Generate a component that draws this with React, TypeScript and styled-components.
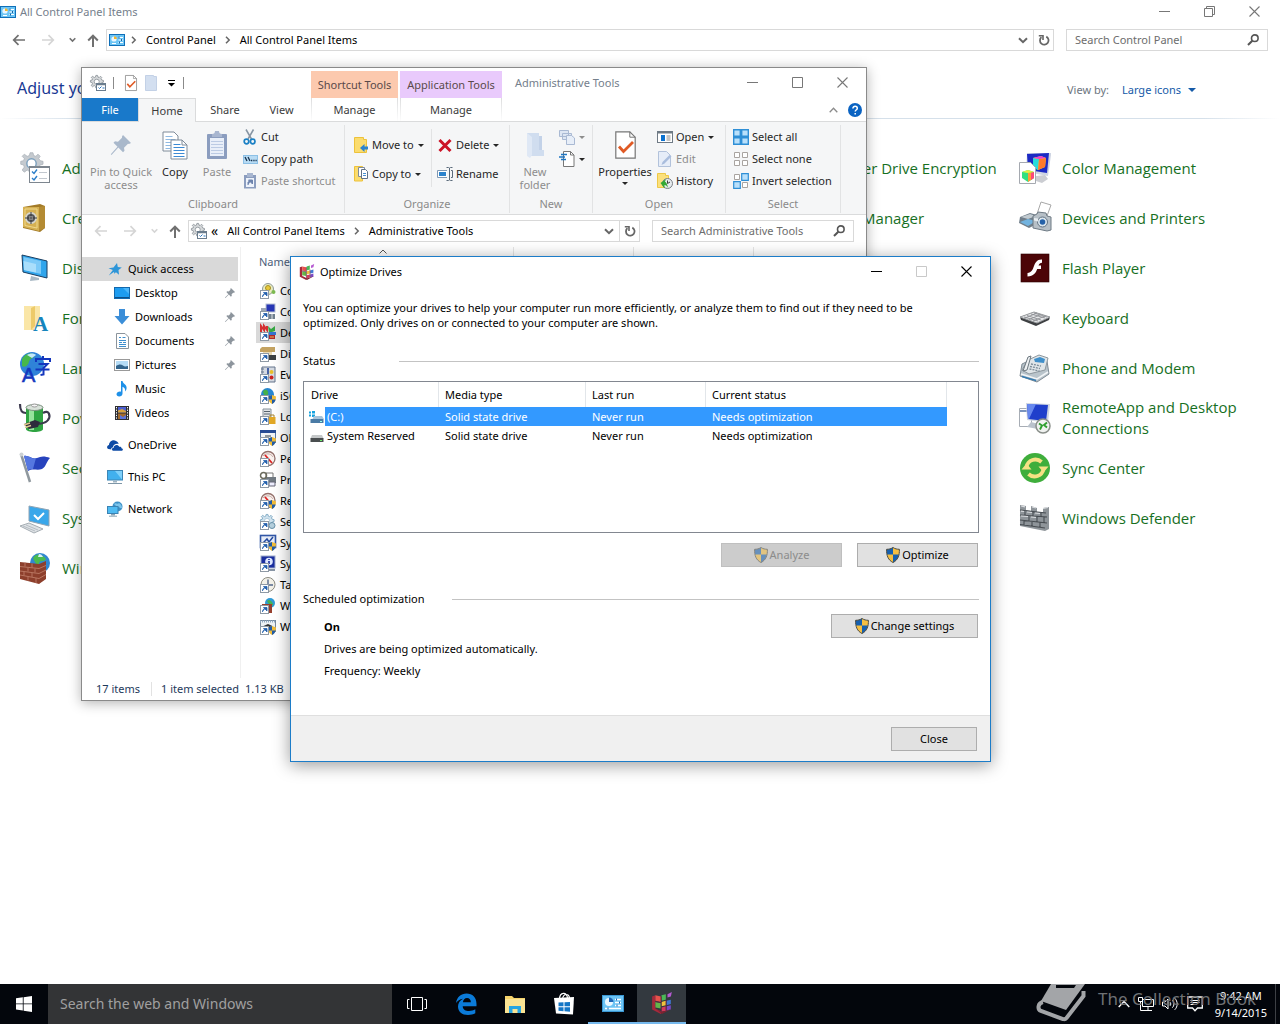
import React from 'react';
import styled, { createGlobalStyle, css } from 'styled-components';

const GlobalStyle = createGlobalStyle`
  *, *::before, *::after { box-sizing: border-box; }
  body { margin: 0; background: #fff; }
  body, button, input, select, table { font: 11px/16px "Noto Sans", "Open Sans", sans-serif; }
  button, input, select { margin: 0; padding: 0; border: 0; background: none; color: inherit; }
  svg { display: block; flex: none; overflow: visible; }
`;

/* ---------- icon helpers ---------- */

type SvgProps = { w: number; h?: number; vw?: number; vh?: number; children: React.ReactNode };
const Svg = ({ w, h = w, vw = w, vh = vw === w ? h : vw, children }: SvgProps) => (
  <svg width={w} height={h} viewBox={`0 0 ${vw} ${vh}`} fill="none" aria-hidden="true">{children}</svg>
);

const gearPath =
  'M14 1h4l1 4 3 1 3-3 3 3-2 3 2 3 4 1v4l-4 1-2 3 2 4-3 3-3-3-3 2-1 4h-4l-1-4-3-2-4 3-3-3 3-4-1-3-4-1v-4l4-1 1-3-3-3 3-3 4 3 3-1z';

/* ---------- window chrome icons ---------- */

const MinIcon = () => <Svg w={11}><path d="M0 5.500h11" stroke="currentColor" /></Svg>;
const MaxIcon = () => <Svg w={11}><path d="M.5 .5h10v10h-10z" stroke="currentColor" /></Svg>;
const RestoreIcon = () => <Svg w={11}><path d="M.5 2.500h8v8h-8zM2.500 2.500v-2h8v8h-2" stroke="currentColor" /></Svg>;
const CloseIcon = () => <Svg w={11}><path d="M.5 .5l10 10M10.500 .5l-10 10" stroke="currentColor" strokeWidth="1.100" /></Svg>;
const BackIcon = () => <Svg w={14} h={12}><path d="M13 6H2M6.500 1.200L1.700 6l4.800 4.800" stroke="currentColor" strokeWidth="1.700" /></Svg>;
const ForwardIcon = () => <Svg w={14} h={12}><path d="M1 6h11M7.500 1.200L12.300 6l-4.800 4.800" stroke="currentColor" strokeWidth="1.700" /></Svg>;
const UpIcon = () => <Svg w={12} h={13}><path d="M6 13V2M1.200 6.500L6 1.700l4.800 4.800" stroke="currentColor" strokeWidth="2" /></Svg>;
const DownIcon = () => <Svg w={7} h={6}><path d="M.7 1.200l2.800 2.800 2.800-2.800" stroke="currentColor" strokeWidth="1.600" /></Svg>;
const BigDownIcon = () => <Svg w={10} h={7}><path d="M1 1.200l4 4 4-4" stroke="currentColor" strokeWidth="2" /></Svg>;
const RightIcon = () => <Svg w={6} h={8}><path d="M1 .8L4.200 4 1 7.200" stroke="#666" strokeWidth="1.500" /></Svg>;
const RefreshIcon = () => <Svg w={12}><path d="M8.300 2.600A4.300 4.300 0 1 1 3.400 3.200" stroke="#666" strokeWidth="1.800" /><path d="M.8 1.800h4.200v4.200" stroke="#666" strokeWidth="1.600" /></Svg>;
const SearchIcon = () => <Svg w={12}><circle cx="7.800" cy="4.200" r="3.300" stroke="#555" strokeWidth="1.600" /><path d="M5.300 6.700L1 11" stroke="#555" strokeWidth="2" /></Svg>;
const Caret = () => <Svg w={6} h={3}><path d="M0 0h6L3 3z" fill="currentColor" /></Svg>;
const SortIcon = () => <Svg w={8} h={5}><path d="M.5 4.500L4 1l3.500 3.500" stroke="#555" /></Svg>;
const CollapseIcon = () => <Svg w={9} h={6}><path d="M.7 5.300l3.800-4 3.800 4" stroke="#8b8b8b" strokeWidth="1.300" /></Svg>;

const HelpIcon = () => (
  <Svg w={14}>
    <circle cx="7" cy="7" r="7" fill="#0a63c2" />
    <path d="M4.900 5.400c0-2.800 4.400-2.700 4.400 0 0 1.400-2.100 1.400-2.100 3.200M7.200 9.900v1.500" stroke="#fff" strokeWidth="1.500" />
  </Svg>
);

const ControlPanelIcon = () => (
  <Svg w={16} h={12}>
    <rect x=".5" y=".5" width="15" height="11" fill="#6cc5f5" stroke="#0f6fb8" />
    <circle cx="5" cy="5" r="2.600" fill="#e8f6ff" /><path d="M5 5V2.200A2.800 2.800 0 0 1 7.800 5z" fill="#f3b52e" />
    <path d="M3 9.500h4M9.500 3.500H14M9.500 6H14M9.500 8.500H14" stroke="#fff" strokeWidth="1.200" />
    <path d="M10 2.500v2M12.500 5v2M10.500 7.500v2" stroke="#1663a4" />
  </Svg>
);

const AdminToolsIcon = () => (
  <Svg w={16}>
    <g transform="scale(.42)"><path d={gearPath} fill="#d5d8da" stroke="#8b9298" strokeWidth="2" /><circle cx="16" cy="16" r="6" fill="#fff" stroke="#8b9298" strokeWidth="2" /></g>
    <rect x="6.500" y="8.500" width="9" height="7" fill="#fff" stroke="#6a7c8d" /><path d="M6.500 9.500h9" stroke="#6a7c8d" strokeWidth="1.500" />
    <path d="M8.500 12.500l1 1 2-2M12.500 13h2" stroke="#2673bd" />
  </Svg>
);

/* ---------- ribbon icons ---------- */

const PropertiesIcon = ({ w = 12, h = 16 }: { w?: number; h?: number }) => (
  <Svg w={w} h={h} vw={21} vh={28}>
    <path d="M.8 .8h14l5.400 5.400v21H.8z" fill="#fff" stroke="#767676" strokeWidth="1.200" />
    <path d="M14.800 .8v5.400h5.400" stroke="#767676" strokeWidth="1" />
    <path d="M4 15.500l4.500 5L18 11" stroke="#e05a25" strokeWidth="2.800" />
  </Svg>
);
const NewFolderSmall = () => <Svg w={12} h={16}><path d="M.5 .5h8v1h3v14H.5z" fill="#d3dff0" stroke="#c3d1e6" /></Svg>;
const NewFolderIcon = () => (
  <Svg w={20} h={28}>
    <path d="M2 2h12v3h3v14h2v6H2z" fill="#d0ddef" /><path d="M2 2l5 4v18l-2 3-3-2z" fill="#dfe8f5" /><path d="M14 5h3v14h-3z" fill="#c3d2e8" />
  </Svg>
);
const BigPinIcon = () => (
  <Svg w={22}>
    <path d="M13 1l8 8-2 1-1-.3-4 4 .5 3L13 18.200 8.300 13.500 1.500 21l-.7-.7L7.500 12.700 3.500 8.800 5 7.300l3 .5 4-4L12 2.500z" fill="#a9b8cb" />
  </Svg>
);
const CopyIcon = () => (
  <Svg w={26} h={29}>
    <path d="M1 1h11l4 4v15H1z" fill="#fff" stroke="#7f8b99" /><path d="M3.500 5.500h7M3.500 8.500h10M3.500 11.500h10M3.500 14.500h10M3.500 17.500h5" stroke="#8fb9e2" />
    <path d="M9 9h11l5 5v14H9z" fill="#fff" stroke="#7f8b99" /><path d="M20 9v5h5" stroke="#7f8b99" />
    <path d="M11.500 13.500h7M11.500 16.500h11M11.500 19.500h11M11.500 22.500h11M11.500 25.500h11" stroke="#3c8ad4" />
  </Svg>
);
const PasteIcon = () => (
  <Svg w={22} h={30}>
    <rect x="1" y="4" width="20" height="25" rx="1" fill="#8b9dbf" /><rect x="4" y="8" width="14" height="18" fill="#e9eff9" />
    <path d="M6 4c2 0 3-1 3-3h4c0 2 1 3 3 3v3H6z" fill="#a8b6d0" />
    <path d="M5 11.500h12M5 14.500h12M5 17.500h12M5 20.500h12M5 23.500h12" stroke="#bccbe4" />
  </Svg>
);
const CutIcon = () => (
  <Svg w={14} h={16}>
    <path d="M3 .5l5.500 9.500M10.500 .5L5 10" stroke="#8795a3" strokeWidth="1.500" />
    <circle cx="3.500" cy="12.500" r="2.300" stroke="#1b80c4" strokeWidth="1.700" /><circle cx="9.700" cy="12.500" r="2.300" stroke="#1b80c4" strokeWidth="1.700" />
  </Svg>
);
const CopyPathIcon = () => (
  <Svg w={15} h={9}>
    <rect x=".5" y=".5" width="14" height="8" fill="#b7dbf4" stroke="#8cc0e6" /><path d="M2 2l2 4M5 2l2 4M8 5.500h1.300M10.300 5.500h1.300M12.500 5.500h1.200" stroke="#16324d" strokeWidth="1.300" />
  </Svg>
);
const PasteShortcutIcon = () => (
  <Svg w={14} h={16}>
    <rect x="1" y="2" width="12" height="13.500" fill="#8b9dbf" /><path d="M4 0h6v4H4z" fill="#a8b6d0" /><rect x="3" y="5" width="8" height="9" fill="#eef3fb" />
    <path d="M5 12V9l3-1M5.500 7h4v4z" stroke="#6d83ad" fill="#6d83ad" />
  </Svg>
);
const MoveToIcon = () => (
  <Svg w={14} h={16}>
    <path d="M.5 .5h9v2h3v13H.5z" fill="#fbdc6e" stroke="#edc23b" /><path d="M14 9.500v3h-3.500V15L6 11l4.500-4v2.500z" fill="#2b83cd" />
  </Svg>
);
const CopyToIcon = () => (
  <Svg w={14} h={16}>
    <path d="M.5 .5h8v14.500H.5z" fill="#fbdc6e" stroke="#edc23b" /><path d="M4.500 1.500h6v9h-6z" fill="#fff" stroke="#7f8b99" />
    <path d="M7.500 3.500h4l2 2v7h-6z" fill="#fff" stroke="#5f7186" /><path d="M9 7.500h3M9 9.500h3" stroke="#4a90d0" />
  </Svg>
);
const DeleteIcon = () => <Svg w={14} h={13}><path d="M1.500 1l11 11M12.500 1l-11 11" stroke="#cc1427" strokeWidth="3" /></Svg>;
const RenameIcon = () => (
  <Svg w={16} h={14}>
    <path d="M10 3.500H.5v7H10" fill="#fff" stroke="#7f98b3" /><rect x="2" y="5" width="7" height="4" fill="#2b83cd" />
    <path d="M9.500 .5h2l1 .6 1-.6h2M9.500 13.500h2l1-.6 1 .6h2M12.500 1v12M14 3.500h1.500v7H14" stroke="#5b6b7b" />
  </Svg>
);
const NewItemIcon = () => (
  <Svg w={16}>
    <path d="M.5 1.500h9v6h-9zM3.500 4.500h9v6h-9z" fill="#dde6f3" stroke="#a9b9d3" /><path d="M7.500 6.500h5l3 2.500v6.500h-8z" fill="#e7eef8" stroke="#a9b9d3" />
  </Svg>
);
const EasyAccessIcon = () => (
  <Svg w={16}>
    <path d="M4.500 .5h7l3.500 3.500v11.500H4.500z" fill="#fff" stroke="#777" /><path d="M11.500 .5V4H15" stroke="#777" />
    <path d="M2 3.500h6M0 6h6M2 8.500h5" stroke="#1f77c3" strokeWidth="1.400" />
  </Svg>
);
const OpenIcon = () => (
  <Svg w={16} h={12}>
    <rect x=".5" y=".5" width="15" height="11" fill="#fff" stroke="#6f7a85" /><path d="M0 1.500h16" stroke="#6f7a85" strokeWidth="2" />
    <rect x="4" y="4" width="4" height="6" fill="#0b71cf" /><path d="M9.500 5h4M9.500 7h4M9.500 9h4" stroke="#888" />
  </Svg>
);
const EditIcon = () => (
  <Svg w={14} h={16}><path d="M.5 .5h8l4 4v11H.5z" fill="#e6edf8" stroke="#b2c2db" /><path d="M13.500 5.500l-7 7-3 1.500 1-3 7-7z" fill="#a9bddd" /></Svg>
);
const HistoryIcon = () => (
  <Svg w={16}>
    <path d="M.5 .5h8v2h3v12H.5z" fill="#fbe07d" stroke="#edc848" /><circle cx="10.500" cy="10.500" r="5" fill="#e6ebee" stroke="#7a7f85" />
    <path d="M10.500 7.500v3l2.500-1.500" stroke="#444" /><path d="M9 6L3.500 10l4 5.500V12c1.500 0 2.500 1 3.500 3-.4-4-2-6-3-6.300z" fill="#35a935" />
  </Svg>
);
const SelectAllIcon = () => (
  <Svg w={16}><path d="M.7 .7h6.600v6.600H.7zM8.700 .7h6.600v6.600H8.700zM.7 8.700h6.600v6.600H.7zM8.700 8.700h6.600v6.600H8.700z" fill="#b9e0fb" stroke="#2f8fd6" strokeWidth="1.400" /></Svg>
);
const SelectNoneIcon = () => (
  <Svg w={16}><path d="M1.500 1.500h5v5h-5zM9.500 1.500h5v5h-5zM1.500 9.500h5v5h-5zM9.500 9.500h5v5h-5z" fill="#fff" stroke="#a9a4a0" /></Svg>
);
const InvertIcon = () => (
  <Svg w={16}>
    <path d="M1.500 1.500h5v5h-5zM9.500 9.500h5v5h-5z" fill="#fff" stroke="#a9a4a0" /><path d="M8.700 .7h6.600v6.600H8.700zM.7 8.700h6.600v6.600H.7z" fill="#b9e0fb" stroke="#2f8fd6" strokeWidth="1.200" />
  </Svg>
);

/* ---------- navigation pane icons ---------- */

const PinIcon = () => (
  <Svg w={10} vw={22}><path d="M13 0l9 9-2 1.500-2-.3-3.500 3.500.5 3.500L13 19 8.500 14.500 1 22l-1-1 7.500-7.500L3 9l2-2 3.300.5L12 4l-.3-2z" fill="#8d959d" /></Svg>
);
const QuickAccessIcon = () => (
  <Svg w={14} h={13}><path d="M9 0l.8 3.900 4 .6-3.300 2.500.5 4.700L8 9.200l-2 1.500.2-2L.8 12.500 4.800 7 .5 5.300l5-.7z" fill="#2d95d8" /></Svg>
);
const DesktopIcon = () => <Svg w={16} h={12}><rect x=".5" y=".5" width="15" height="11" fill="#1d9cf0" stroke="#1268ad" /><path d="M1 10.500h14" stroke="#0d4f88" /><path d="M9 1h6v6z" fill="#4bb6fa" /></Svg>;
const DownloadsIcon = () => <Svg w={16}><path d="M5 0h6v7h4.500L8 15.500.5 7H5z" fill="#3b8ed8" /></Svg>;
const DocumentsIcon = () => (
  <Svg w={13} h={16}><path d="M.5 .5h8.500l3.500 3.500v11.500H.5z" fill="#fff" stroke="#8b949c" /><path d="M6.500 4.500h3M3 7.500h7M3 9.500h3M7 9.500h3M3 11.500h7M3 13.500h7M3 4.500h2" stroke="#3e8fce" /></Svg>
);
const PicturesIcon = () => (
  <Svg w={16} h={12}><rect x=".5" y=".5" width="15" height="11" fill="#fff" stroke="#999" /><path d="M2 2h12v8H2z" fill="#b5dcf6" /><path d="M2 7c3-2 5-2 7-.5s3 1 5 .5v3H2z" fill="#32648c" /></Svg>
);
const MusicIcon = () => <Svg w={12} h={16}><path d="M5 0h1.500c.5 3 5 3.500 4 8-.3 1.300-1 2-1.500 2.500.6-2.500-.5-4-2.500-4.800V12.500c0 1.800-1.500 3-3.300 3C1.500 15.500.5 14.500.5 13.300c0-1.800 2.300-3.200 4.500-2.600z" fill="#1e90e8" /></Svg>;
const VideosIcon = () => (
  <Svg w={14}><path d="M0 0h14v14H0z" fill="#2f2f33" /><path d="M3 1h8v5.500H3z" fill="#4c5fd0" /><path d="M3 7.500h8V13H3z" fill="#a36b2c" /><path d="M3 4.500l4-1.500 4 2v1.500H3z" fill="#d9a33d" /><path d="M5 9l3 2 3-2v4H5z" fill="#5c74dd" /><path d="M1.500 1v12M12.500 1v12" stroke="#fff" strokeDasharray="1.300 1.300" /></Svg>
);
const OneDriveIcon = () => (
  <Svg w={16} h={11}><path d="M1.500 9C-.5 8.500-.3 5.500 2 5c0-3 3.500-6 7-4 2 1 2.600 2.300 2.600 3-3-.7-5.500 1-5.600 3.300C4 7.800 4 8.800 4.500 9.500z" fill="#0e4ba5" /><path d="M7 10.800c-2.500 0-2.700-2.900-.3-3.100.2-3 4.300-3.500 5.500-.9 1.600-.3 2.400.5 2.300 1.500 1.800.1 1.900 2.500 0 2.500z" fill="#0e4ba5" /></Svg>
);
const PcIcon = () => (
  <Svg w={16} h={14}><rect x=".5" y=".5" width="15" height="9.500" fill="#41b0ee" stroke="#3d86b6" /><path d="M8 1h7v8.500z" fill="#7fd0fa" /><path d="M6 10.500h4v2H6z" fill="#9fb4c2" /><path d="M1 13.500h14" stroke="#7e96a7" /></Svg>
);
const NetworkIcon = () => (
  <Svg w={16}><circle cx="10.500" cy="5.500" r="5" fill="#3c90c7" /><path d="M7 3c2-2 3 1 5-1 2 1 3 3 3 5-2 1-3-2-5-1z" fill="#7dc4ea" /><rect x=".5" y="5.500" width="10.500" height="7" fill="#4fbbf2" stroke="#3a83b4" /><path d="M4 13h4v1.500H4z" fill="#8aa5b6" /><path d="M2 15.200h8" stroke="#8aa5b6" /></Svg>
);

/* ---------- shortcut file icons ---------- */

const fileArt: Record<string, React.ReactNode> = {
  component: <><circle cx="8" cy="6" r="5.500" fill="#e9ecc0" stroke="#8f9a9a" /><circle cx="8" cy="5" r="2.500" fill="#e8c93a" stroke="#a58e25" /><circle cx="13.500" cy="9" r="2" fill="#7dbb51" /></>,
  computer: <><rect x="6" y="0" width="9" height="8" fill="#2736b5" stroke="#b9c2d4" /><path d="M1 4h5v8H1z" fill="#9da7b6" /><path d="M9 10h6v5H9z" fill="#70808f" /><path d="M12 10v5" stroke="#dfe3e8" /></>,
  defrag: <><path d="M1 7V1l3 4V1l3 4V1" stroke="#d53030" strokeWidth="2" /><path d="M8 1l3 3 4-3v5l-6 2z" fill="#36a843" /><path d="M8 7h8v3H8z" fill="#3573d1" /><path d="M9 10h6v4H9z" fill="#b0272e" /><path d="M10 12h4" stroke="#e8b84e" /></>,
  disk: <><path d="M0 3l2-2h13v5H0z" fill="#c4a362" /><path d="M3 6h9v3H3z" fill="#e8d9b5" /><path d="M8 9h8v5H8z" fill="#3c4043" /></>,
  event: <><path d="M2 0h13v15H2z" fill="#d5dae2" stroke="#64748c" /><path d="M8 1v13" stroke="#4864a7" strokeWidth="2" /><path d="M1 2h3M1 5h3" stroke="#64748c" /><circle cx="11.500" cy="5" r="2" fill="#eabf2b" /><circle cx="11.500" cy="10.500" r="2" fill="#c22" /></>,
  iscsi: <><circle cx="7.500" cy="6.500" r="6.500" fill="#2585d1" /><path d="M3 3c3-3 6 0 5 3S3 8 3 3z" fill="#43b04a" /></>,
  local: <><path d="M3 0h8v9H3z" fill="#e0e4e6" stroke="#87929b" /><path d="M4 2.500h6M4 5h6" stroke="#57636e" /><rect x="8.500" y="8" width="7" height="7" fill="#e2a826" /><path d="M10 8V6h4v2" stroke="#a8832b" /></>,
  odbc: <><rect x=".5" y=".5" width="15" height="12" fill="#f1f4f7" stroke="#5978a5" /><path d="M0 1.500h16" stroke="#274c95" strokeWidth="3" /><path d="M5 6h6M4 8.500h9" stroke="#303a45" /></>,
  perf: <><circle cx="8" cy="7.500" r="7" fill="#f9f2ef" stroke="#94706b" strokeWidth="1.300" /><path d="M3 5c2-3 8-3 10 1" stroke="#c9aba6" /><path d="M5 4l7 8" stroke="#d22" strokeWidth="1.800" /></>,
  print: <><path d="M6 1h7v5H6z" fill="#fff" stroke="#777" /><path d="M5 5h11v6H5z" fill="#717a82" /><circle cx="3.500" cy="3.500" r="3" stroke="#6b6b5d" strokeWidth="1.500" /><path d="M9 10h6v4H9z" fill="#eef" stroke="#667" /></>,
  services: <><g transform="scale(.44)"><path d={gearPath} fill="#cfe2ee" stroke="#7aa5bf" strokeWidth="2" /><circle cx="16" cy="16" r="6" fill="#fff" stroke="#7aa5bf" /></g><circle cx="12" cy="11.500" r="3" fill="#b4cfdd" stroke="#6690a8" /></>,
  sysconf: <><rect x=".5" y=".5" width="15" height="12" fill="#e6ecf7" stroke="#3156a6" strokeWidth="1.600" /><path d="M3 8l4-4 2 3 4-5" stroke="#234a9f" strokeWidth="1.500" /></>,
  sysinfo: <><rect x="1" y="0" width="14" height="12" fill="#1b2f9f" stroke="#9facc9" /><circle cx="9" cy="5.500" r="3.800" fill="#dde6ff" /><path d="M9 3v1M9 5v3" stroke="#1b2f9f" strokeWidth="1.600" /><path d="M9 14h6" stroke="#8895a5" strokeWidth="2" /></>,
  task: <><circle cx="8" cy="7.500" r="7" fill="#f3f1e8" stroke="#8b8a80" /><path d="M8 2.500V8h5" stroke="#54688c" strokeWidth="1.400" /></>,
  firewall: <><circle cx="10" cy="5" r="5" fill="#2f9bd6" /><path d="M7 3c3-3 5 1 6 3s-4 2-6-3z" fill="#48b355" /><path d="M2 6h10v9H2z" fill="#97402e" /></>,
  memory: <><rect x=".5" y="1.500" width="15" height="11" fill="#eef2f5" stroke="#78899a" /><path d="M0 2.500h16" stroke="#8fa8c2" strokeWidth="2" strokeDasharray="1 1" /><path d="M4 8l4-2 4 2" stroke="#333" strokeWidth="2" /></>,
};
const fileShield = <><path d="M8 8.500l4-1.500 4 1.500c0 4-1.500 6-4 7.500-2.500-1.500-4-3.500-4-7.500z" fill="#f2bd37" /><path d="M12 7v4.500H8.300C8 10.500 8 9.500 8 8.500zM12 11.500h3.700C15 13.500 14 15 12 16z" fill="#215ca8" /></>;
const FileIcon = ({ kind, shield }: { kind: string; shield?: boolean }) => (
  <Svg w={16}>
    {fileArt[kind]}
    {shield && fileShield}
    <rect x=".5" y="7.500" width="8" height="8" fill="#fff" stroke="#8f9aa5" />
    <path d="M2.500 14c0-2 .7-3 2.500-3.300M3.500 9.500H7V13z" stroke="#2461ad" fill="#2461ad" strokeWidth=".8" />
  </Svg>
);

/* ---------- control panel icons ---------- */

const panelArt: Record<string, React.ReactNode> = {
  admin: <><g transform="translate(1 0) scale(.72)"><path d={gearPath} fill="#c5cacf" stroke="#a9b0b7" /><circle cx="16" cy="16" r="6.500" fill="#fff" stroke="#7ca0bd" strokeWidth="2" /></g><rect x="10.500" y="14.500" width="20" height="16" fill="#fff" stroke="#7d868f" /><path d="M10.500 15h20" stroke="#7d868f" strokeWidth="2" /><path d="M13 19.500l2 2 3-4M13 26l2 2 3-4" stroke="#2b7ec9" strokeWidth="1.400" /><path d="M20 20.500h8M20 26.500h8" stroke="#c2c8cf" /></>,
  credential: <><path d="M4 5l17-3 5 2v22l-5 4-17-4z" fill="#a37b28" /><path d="M4 5h16v24L4 25z" fill="#d5b052" /><path d="M20 5l6-1v22l-6 3z" fill="#b48b33" /><path d="M6 7h12v19L6 23.500z" stroke="#f0d88b" /><circle cx="12" cy="16" r="5" fill="#55575a" stroke="#d6d6cf" strokeWidth="1.800" /><circle cx="12" cy="16" r="2" fill="#ddd" /><path d="M12 10v12M6 16h12" stroke="#3b3d3f" /></>,
  display: <><path d="M3 3l25 6v17L4 20z" fill="#30a5ec" stroke="#1a3d60" /><path d="M4.500 5L22 9v13L5 18z" fill="#7ccaf8" /><path d="M4.500 9L17 12v8.500L5 18z" fill="#a9defb" /><path d="M12 24l8 2v2l-9 1z" fill="#a9b9c5" /></>,
  fonts: <><path d="M5 4h7l3 2v22H5z" fill="#f6da86" /><path d="M5 4h16v20l-9 4H5z" fill="#fae6a7" /><path d="M12 6l4-2v20l-4 4z" fill="#edca69" /><text x="14" y="29" fontFamily="Liberation Serif" fontSize="21" fontWeight="700" fill="#1685bd">A</text></>,
  language: <><circle cx="13" cy="12" r="12" fill="#2f83d8" /><path d="M3 7C7 0 13 1 16 3c-2 4-5 3-6 7s-5 6-7 4z" fill="#47b84b" /><path d="M8 3c3-2 7-2 9 0l-4 3z" fill="#c3e8f9" /><text x="3" y="30" fontFamily="Liberation Sans" fontSize="20" fill="#1436bd" stroke="#1436bd" strokeWidth=".6">A</text><path d="M24 4v3M17 10V7h14v3M19.500 12h9l-4 4v6.500l-3 .5M16.500 17.500h14" stroke="#1436bd" strokeWidth="2" /></>,
  power: <><path d="M7 6c0-4 17-4 17 0v21c0 4-17 4-17 0z" fill="#2fa442" /><path d="M10 6h5v22h-5z" fill="#97e39c" /><ellipse cx="15.500" cy="5.500" rx="8.500" ry="3" fill="#d9e2da" stroke="#7d8f80" /><ellipse cx="15.500" cy="3.500" rx="3" ry="1.500" fill="#f5f5f5" stroke="#999" /><path d="M1 2c0 7 2 9 6 9M24 11c6-4 8 3 5 7-2 3-5 3-9 4" stroke="#3c3a4e" strokeWidth="2.200" /><path d="M5 22l11-4 5 2-2 5-9 2z" fill="#2e2b3c" /><path d="M5 23l6-2M6 25.500l6-2" stroke="#e0c98c" strokeWidth="1.500" /></>,
  security: <><path d="M5 4c5-1 8 4 13 2 4-2 8-2 13 0-4 4-4 9-8 11-5 2-9-1-14 2z" fill="#2743bd" /><path d="M5 4c5-1 8 4 12 2l-3 11c-2 0-4 0-5 2z" fill="#5577e0" /><path d="M2 2l9 28" stroke="#8f989e" strokeWidth="2.500" /><circle cx="2.500" cy="2.500" r="2" fill="#ccd1d4" /></>,
  system: <><path d="M10 4l20 4v16l-20-5z" fill="#3aa7ea" stroke="#8fa4b5" /><path d="M15 13l4 4 6-6" stroke="#fff" strokeWidth="2" /><path d="M1 24l9-3 14 6-9 4z" fill="#dfe3e6" stroke="#a5adb3" /><path d="M4 24l12 5M7 23l12 5" stroke="#b6bdc3" /></>,
  firewall: <><circle cx="21" cy="11" r="10" fill="#3187d1" /><path d="M14 6c4-6 10-3 13 1-2 4-7 0-7 5s-4-1-6-6z" fill="#4bbb50" /><path d="M20 2c2 0 3 1 4 3h-5z" fill="#d6f0fa" /><path d="M1 10l19 2v20L1 27zM20 12l7-3v18l-7 5z" fill="#8d3f2c" /><path d="M1 14.500l19 2 7-3M1 19l19 2.500 7-3.500M1 23l19 3.500 7-4M6 10.500v4M13 11.500v4.500M9 15.500v4M16 16.500v4M5 19.500v4M13 21v4M9 24.500v4M17 26v5" stroke="#b87560" /></>,
  device: <><rect x="3" y="14" width="26" height="12" fill="#aaa" /></>,
  color: <><path d="M8 1h24v2l-3 21-22-4z" fill="#cfd5e3" /><path d="M8 2l22-1-2 20-19-3z" fill="#1c2ac4" /><path d="M14 6l8-2 5 2-1 9-7 3-5-3z" fill="#ffd83d" /><path d="M14 6l6 1-1 11-5-3z" fill="#27dbda" /><path d="M20 7l7-1-1 9-7 3z" fill="#ff7a2c" /><path d="M14 6l8-2 5 2-7 1z" fill="#ed3cd5" /><path d="M17 24l9-1 3 4-6 4-6-2z" fill="#cbcdd2" /><path d="M.5 10.500h11l5 5v16H.5z" fill="#fff" stroke="#a5a9b0" /><path d="M3 20l6-2 6 2v6l-6 4-6-4z" fill="#30e080" /><path d="M9 21l6-1v6l-6 4z" fill="#ff9d35" /><path d="M3 20l6-2 6 2-6 1z" fill="#e7ef42" /><path d="M12 21l3-1v6l-3 2z" fill="#fa4a7b" /></>,
  devices: <><path d="M18 12l4-12 10 3-4 11z" fill="#fff" stroke="#a8a8a8" /><path d="M1 15l10-4 7 2v9l-8 4-10-5z" fill="#707e8a" /><path d="M2 15l9-3 6 2-8 3z" fill="#c2cbd1" /><path d="M1 20l8-3 8 2-8 5z" fill="#72b3df" /><path d="M14 14l4-2 1-2 8 1 1 3 4 1v13l-4 1-14-3z" fill="#b7c0c7" stroke="#6e7a84" /><circle cx="23.500" cy="20" r="5" fill="#dbe6ed" stroke="#637383" /><circle cx="23.500" cy="20" r="2.800" fill="#2662a8" /><path d="M15 16l4 .5v3l-4-1z" fill="#e7edf1" /></>,
  flash: <><rect x="2" y="2" width="28" height="28" fill="#4c0507" stroke="#2a0203" strokeWidth=".6" /><path d="M23 7.500c-5-.3-7 3.500-8 6.500-1.300 3.800-2.500 6.500-6.500 7v3.500c6 0 8.500-4 9.700-7.500H22v-3.500h-2.500c.8-1.700 1.700-2.700 3.500-2.700z" fill="#fff" /></>,
  keyboard: <><path d="M1 15l14-5 16 5-1 3-13 6L2 18z" fill="#3e4043" /><path d="M1 15l14-5 16 5-13 6z" fill="#e5e6e8" stroke="#9b9ea1" /><path d="M5 15l14 4M8 13.500l14 4.500M12 12l14 4M15 11l13 4M5 16.500l13-5.500M10 17.500l12-5M14 19l12-5" stroke="#8d9094" strokeWidth=".9" /></>,
  phone: <><path d="M1 24l2-12L20 4l8 5 2 13-12 8z" fill="#b9c4cb" stroke="#7f8b94" /><path d="M9 8l11-5 9 3-3 12-16 4-7-4z" fill="#dfe5e8" stroke="#8d979e" /><path d="M15 7l6-2 5 2-1 4-9-1z" fill="#3f8fca" /><path d="M4 19L9 5l3-1-4 14z" fill="#eef1f3" stroke="#6d7880" /><path d="M12 12l10 2M11 14.500l10 2M10.500 17l10 2" stroke="#7c8c98" strokeWidth="1.300" strokeDasharray="2 1" /><path d="M2 22l16 5 11-7" stroke="#f1f4f6" strokeWidth="1.500" /><path d="M3 24.500l14 4" stroke="#367bb0" strokeWidth="1.500" /></>,
  remote: <><path d="M.5 6.500h12v18H.5z" fill="#fff" stroke="#a7adb5" /><path d="M1 9h11" stroke="#7a93bd" strokeWidth="2" /><path d="M7 1l24 1-2 19-21-3z" fill="#ced5e1" /><path d="M8 2l21 1-2 16-18-2z" fill="#1f3fcb" /><path d="M8 2h9l-7 15H9z" fill="#6788ee" /><path d="M12 20l8 2-1 5-11-2z" fill="#bac2cc" /><circle cx="24" cy="24" r="7" fill="#f0f2f0" stroke="#8a8f8a" strokeWidth="1.500" /><path d="M20 21.500l3 2-2 4M28 20.500l-3 2.500 3 2.500" stroke="#2e9f2e" strokeWidth="1.900" /></>,
  sync: <><circle cx="16" cy="16" r="15" fill="#3fae3c" /><path d="M7.500 15a9 9 0 0 1 15-5M24.500 17a9 9 0 0 1-15 5" stroke="#f6e184" strokeWidth="3.800" /><path d="M2.500 17.500h10L7.500 11.500zM29.500 14.500h-10l5 6z" fill="#f6e184" /></>,
  defender: <><path d="M1 3l6 1v4l5 1V4l6 2v4h6V6l6-1v22l-4 2L1 24z" fill="#8e9499" /><path d="M1 8l26 3M1 13l27 2M1 18l27 3M1 22.500l25 3.500M6 8.500V13M14 9.500V14M22 10.500V15M10 13.500V19M18 14.500V20M25 15v6M5 18.500v5M13 19.500v5M21 20.500v5" stroke="#484d52" strokeWidth="1.100" /><path d="M2 4l4 .8M13 5l4 1M24 6.500l5-1M2 9.200l3 .3M8 10l5 .5M16 11l5 .5M2 14l7 .5M12 15l5 .5" stroke="#dadde0" strokeWidth="1.200" /></>,
};
const PanelIcon = ({ kind }: { kind: string }) => <Svg w={32}>{panelArt[kind]}</Svg>;

/* ---------- dialog and taskbar icons ---------- */

const DefragIcon = ({ size = 16 }: { size?: number }) => (
  <Svg w={size} vw={20}>
    <path d="M1 4l3-1v12l6 3-1 2-8-4z" fill="#a52a3c" /><path d="M4 3l5 1v5l-5-1z" fill="#e8524c" /><path d="M4 9l5 1v5l-5-1z" fill="#63b64a" />
    <path d="M9.500 3l4-1v5l-4 1z" fill="#4bb857" /><path d="M9.500 9l4-1v4l-4 1z" fill="#f0c33c" /><path d="M9.500 14l4-1v4l-4 1z" fill="#d53a5c" />
    <path d="M14 8l4-1v4l-4 1z" fill="#3f78d3" /><path d="M14 13l4-1v4l-4 1z" fill="#7a48c6" /><path d="M15 2l4-2-1 4-3 1z" fill="#b65ad2" />
    <path d="M4 15l5 3 5-1 5-2-9 5z" fill="#7d2230" /><path d="M9.200 4v14M4 8.700l5 1M13.800 7v10" stroke="#5a2440" strokeWidth=".8" />
  </Svg>
);
const ShieldIcon = () => (
  <Svg w={14} h={16}>
    <path d="M7 .5C5 1.800 3 2.300 .6 2.300.4 8.500 2 13 7 15.500 12 13 13.600 8.500 13.400 2.300 11 2.300 9 1.800 7 .5z" fill="#f5bf42" />
    <path d="M7 .5C5 1.800 3 2.300 .6 2.300c0 2 .1 3.700.5 5.200H7zM7 7.500h5.900c-.8 3.800-2.600 6.400-5.900 8z" fill="#1560b0" />
    <path d="M7 .5C5 1.800 3 2.300 .6 2.300.4 8.500 2 13 7 15.500 12 13 13.600 8.500 13.400 2.300 11 2.300 9 1.800 7 .5z" stroke="#4c4c45" strokeWidth="1" />
  </Svg>
);
const SystemDriveIcon = () => (
  <Svg w={16} h={14}><path d="M0 1.500h2v2H0zM3 1h3v2.500H3zM0 4.500h2v2H0zM3 4.500h3V7H3z" fill="#17a3e0" /><path d="M3.500 9l1.500-3h8l2 3z" fill="#a9c4da" /><path d="M1.500 9h13v4h-13z" fill="#4a7ba5" /><path d="M11 11.500h2" stroke="#9fe" /></Svg>
);
const DriveIcon = () => <Svg w={16} h={14}><path d="M3 6h10l1.500 3.500h-13z" fill="#c5c8c9" /><path d="M1.500 9h13v4h-13z" fill="#4a4e50" /><path d="M11 11.500h2" stroke="#6cf06c" /></Svg>;

const StartIcon = () => <Svg w={16}><path d="M0 2.300l6.800-1v6.200H0zM7.600 1.200L16 0v7.500H7.600zM0 8.300h6.800v6.300L0 13.600zM7.600 8.300H16V16l-8.400-1.200z" fill="#fff" /></Svg>;
const TaskViewIcon = () => <Svg w={20} h={14}><path d="M4.500 .5h11v13h-11zM2.500 2.500h-2v9h2M17.500 2.500h2v9h-2" stroke="#fff" /></Svg>;
const EdgeIcon = () => (
  <Svg w={22}><path d="M1 10C2 4 6 .5 11.500 .5 17.500 .5 21.500 4.500 21.500 11v2.200H7.700c.2 3.300 3 4.800 6.300 4.800 2.500 0 4.500-.6 6.300-1.700v4c-2 1.100-4.400 1.700-7.300 1.700C7 22 3 18.500 3 13.500c0-3.300 1.800-6.200 5-7.800C4.800 6.200 2.500 7.700 1 10zM7.900 9.300h8C15.800 6.800 14.500 5 12 5 9.700 5 8.300 6.700 7.900 9.300z" fill="#0b7bd9" /></Svg>
);
const FolderTaskIcon = () => (
  <Svg w={22} h={20}><path d="M1 2h7l2 2h11v15H1z" fill="#f5d36c" /><path d="M1 5h20v14H1z" fill="#fbe393" /><path d="M5 19v-7h12v7h-3.500v-4h-5v4z" fill="#27a5e3" /></Svg>
);
const StoreIcon = () => (
  <Svg w={22} h={24}><path d="M1 6l20-1-1 17.500-17-1z" fill="#fff" /><path d="M6.500 7.500c0-8 8-8 8-1M9.500 7c1-6 7-6 7 0" stroke="#fff" strokeWidth="1.200" /><path d="M5.500 10.500l5-.3v4h-5zM11.500 10.200l5.500-.3v4.300h-5.500zM5.500 15.200h5v4l-5-.4zM11.500 15.200H17v4.500l-5.500-.4z" fill="#1476c6" /></Svg>
);
const ControlPanelTask = () => (
  <Svg w={22} h={17}><rect x=".5" y=".5" width="21" height="16" fill="#6cc4f5" stroke="#3b97d3" /><circle cx="7" cy="7" r="4" fill="#eaf7ff" /><path d="M7 7V2.500A4.500 4.500 0 0 1 11.500 7z" fill="#1c64b5" /><path d="M13 4.500h6M13 7.500h6M13 10.500h6M3 13.500h16" stroke="#fff" strokeWidth="1.300" /><path d="M14.500 3.500v2M17.500 6.500v2M15 9.500v2M6 12.500v2" stroke="#1c64b5" /></Svg>
);
const TrayUp = () => <Svg w={12} h={8}><path d="M.7 7L6 1.500 11.300 7" stroke="#fff" strokeWidth="1.400" /></Svg>;
const TrayNet = () => <Svg w={16} h={15}><path d="M4.500 2.500h11v7h-11zM10 10v3.500M6 13.500h8M.5 .5h4v4h-4zM2.500 4.500v9H6" stroke="#fff" /></Svg>;
const TrayVolume = () => <Svg w={17} h={14}><path d="M.5 5h2.500l3-3v10l-3-3H.5zM8 5.200c1 1 1 2.600 0 3.600M10.300 3.300c2.200 2 2.200 5.400 0 7.400M12.700 1.200c3.300 3.200 3.300 8.400 0 11.600" stroke="#fff" /></Svg>;
const TrayAction = () => <Svg w={16}><path d="M.7 1h14.600v11H10.500L8 14.700 5.500 12H.7z" stroke="#fff" strokeWidth="1.300" /><path d="M3.500 4.500h9M3.500 6.500h9M3.500 8.500h6" stroke="#fff" /></Svg>;
const BookIcon = () => (
  <Svg w={50} h={39}>
    <path d="M15 0h34L30 26 5 17z" fill="#a3a5a8" />
    <path d="M7 18c-5 1-6 7-2 9l22 8c1.500 .6 2.500 .2 3.500-1L47.500 12V7" stroke="#a3a5a8" strokeWidth="4" />
    <path d="M20 1h20l-2 3H20z" fill="#03060c" />
  </Svg>
);

/* ---------- shared parts ---------- */

const Desktop = styled.div`
  position: relative;
  display: flex;
  flex-direction: column;
  min-height: 100vh;
  overflow: hidden;
  color: #1a1a1a;
`;

const Controls = styled.div<{ $color: string }>`
  display: flex;
  align-self: stretch;
  margin-left: auto;
  color: ${p => p.$color};
`;
const ControlButton = styled.button`
  display: grid;
  place-items: center;
  width: 45px;
  padding-bottom: 2px;
  &:disabled { color: #c9c9c9; }
`;

const NavBar = styled.nav`
  display: flex;
  align-items: center;
  height: 32px;
  padding: 0 12px 0 5px;
`;
const NavButton = styled.button<{ $width: number }>`
  display: grid;
  place-items: center;
  width: ${p => p.$width}px;
  height: 22px;
  color: #707070;
  &:disabled { color: #d5d5d5; }
`;
const AddressBox = styled.div`
  display: flex;
  flex: 1;
  align-items: center;
  height: 22px;
  margin: 0 12px 0 1px;
  padding-left: 2px;
  border: 1px solid #d9d9d9;
  color: #000;
`;
const Crumb = styled.span`
  padding: 0 9px 0 9px;
  white-space: nowrap;
`;
const AddressEnd = styled.div`
  display: flex;
  height: 20px;
  margin-left: auto;
  color: #666;
`;
const EndButton = styled.button`
  display: grid;
  place-items: center;
  width: 20px;
  & + & { border-left: 1px solid #d9d9d9; }
`;
const SearchBox = styled.label`
  display: flex;
  align-items: center;
  width: 202px;
  height: 22px;
  padding: 0 8px;
  border: 1px solid #d9d9d9;
`;
const SearchInput = styled.input`
  flex: 1;
  min-width: 0;
  outline: 0;
  &::placeholder { color: #6d6d6d; opacity: 1; }
`;
const CrumbArrow = styled.span<{ $first: boolean }>`
  padding-left: ${p => (p.$first ? 6 : 0)}px;
`;
const Chevrons = styled.span`
  padding-left: 4px;
  font-size: 14px;
`;

type NavProps = { icon: React.ReactNode; crumbs: string[]; search: string; active?: boolean; prefix?: boolean };
const Navigation = ({ icon, crumbs, search, active, prefix }: NavProps) => (
  <NavBar>
    <NavButton $width={28} aria-label="Back" disabled={!active}><BackIcon /></NavButton>
    <NavButton $width={30} aria-label="Forward" disabled><ForwardIcon /></NavButton>
    <NavButton $width={18} aria-label="Recent locations" disabled={!active}><DownIcon /></NavButton>
    <NavButton $width={24} aria-label="Up"><UpIcon /></NavButton>
    <AddressBox>
      {icon}
      {crumbs.map((c, i) => (
        <React.Fragment key={c}>
          {prefix && i === 0 ? <Chevrons>«</Chevrons> : <CrumbArrow $first={i === 0}><RightIcon /></CrumbArrow>}
          <Crumb>{c}</Crumb>
        </React.Fragment>
      ))}
      <AddressEnd>
        <EndButton aria-label="Previous locations"><BigDownIcon /></EndButton>
        <EndButton aria-label="Refresh"><RefreshIcon /></EndButton>
      </AddressEnd>
    </AddressBox>
    <SearchBox>
      <SearchInput type="text" placeholder={search} aria-label={search} />
      <SearchIcon />
    </SearchBox>
  </NavBar>
);

/* ---------- control panel window ---------- */

const Panel = styled.main`
  flex: 1;
  background: #fff;
`;
const PanelTitle = styled.header`
  display: flex;
  align-items: center;
  height: 24px;
  padding-right: 3px;
  gap: 4px;
  color: #75808c;
`;
const PanelHead = styled.div`
  display: flex;
  align-items: center;
  justify-content: space-between;
  height: 62px;
  padding: 2px 84px 0 17px;
`;
const PanelHeading = styled.h1`
  margin: 0;
  color: #1a3a94;
  font-size: 16px;
  font-weight: 400;
`;
const ViewBy = styled.div`
  display: flex;
  align-items: center;
  padding-top: 3px;
  color: #6d7580;
`;
const ViewSelect = styled.select`
  margin: 0 6px 0 13px;
  appearance: none;
  color: #155aa8;
`;
const ViewCaret = styled.span`
  color: #155aa8;
`;
const FadeRule = styled.hr`
  height: 1px;
  margin: 0;
  border: 0;
  background: linear-gradient(90deg, #fff, #d5e0ea 6%, #d5e0ea 94%, #fff);
`;
const ItemGrid = styled.div`
  display: grid;
  grid-template-columns: repeat(5, 1fr);
  grid-auto-rows: 50px;
  padding: 24px 11px 0 19px;
`;
const PanelItem = styled.a<{ $col: number; $row: number }>`
  display: flex;
  grid-area: ${p => p.$row} / ${p => p.$col};
  align-items: center;
  gap: 11px;
  color: #17701f;
  font-family: "Open Sans", "Noto Sans", sans-serif;
  font-size: 15px;
  line-height: 21px;
  text-decoration: none;
`;

const panelItems: [string, string, number, number][] = [
  ['Administrative Tools', 'admin', 1, 1], ['BitLocker Drive Encryption', 'device', 1, 4], ['Color Management', 'color', 1, 5],
  ['Credential Manager', 'credential', 2, 1], ['Device Manager', 'device', 2, 4], ['Devices and Printers', 'devices', 2, 5],
  ['Display', 'display', 3, 1], ['Flash Player', 'flash', 3, 5],
  ['Fonts', 'fonts', 4, 1], ['Keyboard', 'keyboard', 4, 5],
  ['Language', 'language', 5, 1], ['Phone and Modem', 'phone', 5, 5],
  ['Power Options', 'power', 6, 1], ['RemoteApp and Desktop Connections', 'remote', 6, 5],
  ['Security and Maintenance', 'security', 7, 1], ['Sync Center', 'sync', 7, 5],
  ['System', 'system', 8, 1], ['Windows Defender', 'defender', 8, 5],
  ['Windows Firewall', 'firewall', 9, 1],
];

const ControlPanel = () => (
  <Panel>
    <PanelTitle>
      <ControlPanelIcon />
      All Control Panel Items
      <Controls $color="#777">
        <ControlButton aria-label="Minimize"><MinIcon /></ControlButton>
        <ControlButton aria-label="Restore"><RestoreIcon /></ControlButton>
        <ControlButton aria-label="Close"><CloseIcon /></ControlButton>
      </Controls>
    </PanelTitle>
    <Navigation active icon={<ControlPanelIcon />} crumbs={['Control Panel', 'All Control Panel Items']} search="Search Control Panel" />
    <PanelHead>
      <PanelHeading>Adjust your computer's settings</PanelHeading>
      <ViewBy>
        <label htmlFor="view-by">View by:</label>
        <ViewSelect id="view-by"><option>Large icons</option></ViewSelect>
        <ViewCaret><Svg w={8} h={4}><path d="M0 0h8L4 4z" fill="currentColor" /></Svg></ViewCaret>
      </ViewBy>
    </PanelHead>
    <FadeRule />
    <ItemGrid>
      {panelItems.map(([name, kind, row, col]) => (
        <PanelItem key={name} href="#" $row={row} $col={col}><PanelIcon kind={kind} />{name}</PanelItem>
      ))}
    </ItemGrid>
  </Panel>
);

/* ---------- explorer window ---------- */

const Explorer = styled.section`
  position: absolute;
  top: 67px;
  left: 81px;
  display: flex;
  flex-direction: column;
  width: 786px;
  border: 1px solid #8a8a8a;
  background: #fff;
  box-shadow: 0 2px 12px rgba(0, 0, 0, 0.3);
`;
const ExplorerTop = styled.header`
  display: flex;
  align-items: center;
  height: 30px;
  padding-right: 1px;
`;
const QuickBar = styled.div`
  display: flex;
  align-items: center;
  width: 229px;
  padding-left: 8px;
`;
const QuickButton = styled.button`
  display: grid;
  place-items: center;
  width: 20px;
  height: 20px;
  color: #000;
`;
const QuickRule = styled.span<{ $left: number }>`
  width: 1px;
  height: 12px;
  margin: 0 7px 0 ${p => p.$left}px;
  background: #8a8a8a;
`;
const ContextTitle = styled.div<{ $width: number; $color: string }>`
  align-self: flex-end;
  width: ${p => p.$width}px;
  height: 27px;
  margin-right: 2px;
  background: ${p => p.$color};
  color: #5a4a4a;
  line-height: 28px;
  text-align: center;
  white-space: nowrap;
`;
const ExplorerTitle = styled.h2`
  margin: 0 0 0 11px;
  color: #75808c;
  font-size: 11px;
  font-weight: 400;
`;
const TabRow = styled.div`
  display: flex;
  align-items: stretch;
  height: 24px;
  border-bottom: 1px solid #dadbdc;
`;
const Tab = styled.button<{ $width: number; $kind?: 'file' | 'open' | 'context' }>`
  width: ${p => p.$width}px;
  color: #3b3b3b;
  text-align: center;
  ${p => p.$kind === 'file' && css`background: #1979ca; color: #fff;`}
  ${p => p.$kind === 'open' && css`
    margin-bottom: -1px;
    border: 1px solid #dadbdc;
    border-bottom: 0;
    background: #f5f6f7;
  `}
  ${p => p.$kind === 'context' && css`
    margin-right: 2px;
    border: 1px solid;
    border-width: 0 1px;
    border-image: linear-gradient(#dadbdc, #fff) 1;
  `}
`;
const TabSpacer = styled.span`
  width: 2px;
`;
const TabEnd = styled.div`
  display: flex;
  align-items: center;
  gap: 10px;
  margin-left: auto;
  padding-right: 4px;
`;
const IconButton = styled.button`
  display: grid;
  place-items: center;
`;

const Ribbon = styled.div`
  display: flex;
  height: 93px;
  border-bottom: 1px solid #dadbdc;
  background: #f5f6f7;
`;
const Group = styled.div<{ $width: number }>`
  display: flex;
  flex-direction: column;
  width: ${p => p.$width}px;
  margin: 3px 0 1px;
  border-right: 1px solid #e2e3e4;
`;
const GroupBody = styled.div<{ $pad: number }>`
  display: flex;
  flex: 1;
  align-items: flex-start;
  padding-left: ${p => p.$pad}px;
`;
const GroupLabel = styled.div`
  color: #8a8a8a;
  line-height: 18px;
  text-align: center;
`;
const BigButton = styled.button<{ $width: number }>`
  display: flex;
  flex-direction: column;
  align-items: center;
  width: ${p => p.$width}px;
  color: #262626;
  line-height: 13px;
  &:disabled { color: #8d8d8d; }
`;
const BigArt = styled.span`
  display: grid;
  place-items: center;
  height: 40px;
`;
const BigCaret = styled.span`
  padding-top: 4px;
`;
const SmallColumn = styled.div<{ $wide?: boolean; $left?: number }>`
  display: flex;
  flex-direction: column;
  gap: ${p => (p.$wide ? 7 : 0)}px;
  padding-top: ${p => (p.$wide ? 9 : 1)}px;
  margin-left: ${p => p.$left ?? 0}px;
`;
const SmallButton = styled.button`
  display: flex;
  align-items: center;
  gap: 4px;
  height: 22px;
  color: #262626;
  white-space: nowrap;
  &:disabled { color: #8d8d8d; }
`;
const SmallArt = styled.span`
  display: grid;
  place-items: center;
  width: 16px;
  margin-right: -1px;
`;
const GroupRule = styled.span`
  width: 1px;
  height: 58px;
  margin: 4px 5px 0 auto;
  background: #e2e3e4;
`;
const RuledColumn = styled.div`
  display: flex;
  width: 84px;
`;

const Small = ({ icon, label, caret, disabled }: { icon: React.ReactNode; label: string; caret?: boolean; disabled?: boolean }) => (
  <SmallButton disabled={disabled}><SmallArt>{icon}</SmallArt>{label}{caret && <Caret />}</SmallButton>
);

const ExplorerBody = styled.div`
  display: flex;
`;
const Sidebar = styled.nav`
  width: 159px;
  padding: 10px 2px 0 0;
  border-right: 1px solid #f0f0f0;
`;
const SideItem = styled.a<{ $level?: 'root' | 'child'; $selected?: boolean }>`
  display: flex;
  align-items: center;
  height: 24px;
  margin-bottom: ${p => (p.$level === 'root' ? 8 : 0)}px;
  padding: 0 3px 0 ${p => (p.$level === 'child' ? 31 : 24)}px;
  background: ${p => (p.$selected ? '#d9d9d9' : 'none')};
  color: #000;
  text-decoration: none;
`;
const SideArt = styled.span`
  display: grid;
  place-items: center;
  width: 18px;
  margin-right: 4px;
`;
const SidePin = styled.span`
  margin-left: auto;
`;
const SideGap = styled.div`
  height: 8px;
`;
const FilePane = styled.div`
  flex: 1;
  min-height: 431px;
  padding-left: 15px;
`;
const FileHeader = styled.div`
  display: grid;
  grid-template-columns: 255px 120px 120px 1fr;
  height: 30px;
  margin-bottom: 3px;
  padding-left: 3px;
  color: #4c607a;
  line-height: 29px;
`;
const FileHeadCell = styled.span`
  position: relative;
  border-right: 1px solid #e5e5e5;
`;
const SortMark = styled.span`
  position: absolute;
  top: 2px;
  left: 120px;
`;
const FileRow = styled.div<{ $selected?: boolean }>`
  display: flex;
  align-items: center;
  gap: 4px;
  height: 21px;
  padding-left: 4px;
  background: ${p => (p.$selected ? '#d9d9d9' : 'none')};
  color: #000;
`;
const StatusBar = styled.footer`
  display: flex;
  align-items: center;
  height: 22px;
  padding-left: 14px;
  color: #1e395b;
`;
const StatusRule = styled.span`
  width: 1px;
  height: 14px;
  margin: 0 9px 0 11px;
  background: #e2e2e2;
`;
const StatusSize = styled.span`
  padding-left: 6px;
`;

const sideItems: [string, React.ReactNode, boolean][] = [
  ['Desktop', <DesktopIcon />, true], ['Downloads', <DownloadsIcon />, true], ['Documents', <DocumentsIcon />, true],
  ['Pictures', <PicturesIcon />, true], ['Music', <MusicIcon />, false], ['Videos', <VideosIcon />, false],
];
const rootItems: [string, React.ReactNode][] = [['OneDrive', <OneDriveIcon />], ['This PC', <PcIcon />], ['Network', <NetworkIcon />]];
const files: [string, string, boolean?][] = [
  ['Component Services', 'component'], ['Computer Management', 'computer'], ['Defragment and Optimize Drives', 'defrag'],
  ['Disk Cleanup', 'disk'], ['Event Viewer', 'event'], ['iSCSI Initiator', 'iscsi', true], ['Local Security Policy', 'local'],
  ['ODBC Data Sources', 'odbc', true], ['Performance Monitor', 'perf'], ['Print Management', 'print'], ['Resource Monitor', 'perf', true],
  ['Services', 'services'], ['System Configuration', 'sysconf', true], ['System Information', 'sysinfo'], ['Task Scheduler', 'task'],
  ['Windows Firewall', 'firewall'], ['Windows Memory Diagnostic', 'memory', true],
];

const ExplorerWindow = () => (
  <Explorer aria-label="Administrative Tools">
    <ExplorerTop>
      <QuickBar>
        <AdminToolsIcon />
        <QuickRule $left={7} />
        <QuickButton aria-label="Properties"><PropertiesIcon /></QuickButton>
        <QuickButton aria-label="New folder"><NewFolderSmall /></QuickButton>
        <QuickButton aria-label="Customize toolbar"><Svg w={7} h={7}><path d="M0 .5h7" stroke="#000" /><path d="M0 3h7L3.500 6.500z" fill="#000" /></Svg></QuickButton>
        <QuickRule $left={2} />
      </QuickBar>
      <ContextTitle $width={87} $color="#fcc9ae">Shortcut Tools</ContextTitle>
      <ContextTitle $width={102} $color="#e9cafc">Application Tools</ContextTitle>
      <ExplorerTitle>Administrative Tools</ExplorerTitle>
      <Controls $color="#777">
        <ControlButton aria-label="Minimize"><MinIcon /></ControlButton>
        <ControlButton aria-label="Maximize"><MaxIcon /></ControlButton>
        <ControlButton aria-label="Close"><CloseIcon /></ControlButton>
      </Controls>
    </ExplorerTop>
    <TabRow>
      <Tab $width={56} $kind="file">File</Tab>
      <Tab $width={58} $kind="open">Home</Tab>
      <Tab $width={58}>Share</Tab>
      <Tab $width={55}>View</Tab>
      <TabSpacer />
      <Tab $width={87} $kind="context">Manage</Tab>
      <Tab $width={102} $kind="context">Manage</Tab>
      <TabEnd>
        <IconButton aria-label="Collapse ribbon"><CollapseIcon /></IconButton>
        <IconButton aria-label="Help"><HelpIcon /></IconButton>
      </TabEnd>
    </TabRow>
    <Ribbon>
      <Group $width={263}>
        <GroupBody $pad={4}>
          <BigButton $width={70} disabled><BigArt><BigPinIcon /></BigArt>Pin to Quick access</BigButton>
          <BigButton $width={38}><BigArt><CopyIcon /></BigArt>Copy</BigButton>
          <BigButton $width={46} disabled><BigArt><PasteIcon /></BigArt>Paste</BigButton>
          <SmallColumn $left={2}>
            <Small icon={<CutIcon />} label="Cut" />
            <Small icon={<CopyPathIcon />} label="Copy path" />
            <Small icon={<PasteShortcutIcon />} label="Paste shortcut" disabled />
          </SmallColumn>
        </GroupBody>
        <GroupLabel>Clipboard</GroupLabel>
      </Group>
      <Group $width={165}>
        <GroupBody $pad={8}>
          <RuledColumn>
            <SmallColumn $wide>
              <Small icon={<MoveToIcon />} label="Move to" caret />
              <Small icon={<CopyToIcon />} label="Copy to" caret />
            </SmallColumn>
            <GroupRule />
          </RuledColumn>
          <SmallColumn $wide>
            <Small icon={<DeleteIcon />} label="Delete" caret />
            <Small icon={<RenameIcon />} label="Rename" />
          </SmallColumn>
        </GroupBody>
        <GroupLabel>Organize</GroupLabel>
      </Group>
      <Group $width={83}>
        <GroupBody $pad={4}>
          <BigButton $width={42} disabled><BigArt><NewFolderIcon /></BigArt>New folder</BigButton>
          <SmallColumn $left={3}>
            <SmallButton aria-label="New item" disabled><NewItemIcon /><Caret /></SmallButton>
            <SmallButton aria-label="Easy access"><EasyAccessIcon /><Caret /></SmallButton>
          </SmallColumn>
        </GroupBody>
        <GroupLabel>New</GroupLabel>
      </Group>
      <Group $width={133}>
        <GroupBody $pad={4}>
          <BigButton $width={56}><BigArt><PropertiesIcon w={21} h={28} /></BigArt>Properties<BigCaret><Caret /></BigCaret></BigButton>
          <SmallColumn $left={4}>
            <Small icon={<OpenIcon />} label="Open" caret />
            <Small icon={<EditIcon />} label="Edit" disabled />
            <Small icon={<HistoryIcon />} label="History" />
          </SmallColumn>
        </GroupBody>
        <GroupLabel>Open</GroupLabel>
      </Group>
      <Group $width={115}>
        <GroupBody $pad={7}>
          <SmallColumn>
            <Small icon={<SelectAllIcon />} label="Select all" />
            <Small icon={<SelectNoneIcon />} label="Select none" />
            <Small icon={<InvertIcon />} label="Invert selection" />
          </SmallColumn>
        </GroupBody>
        <GroupLabel>Select</GroupLabel>
      </Group>
    </Ribbon>
    <Navigation prefix icon={<AdminToolsIcon />} crumbs={['All Control Panel Items', 'Administrative Tools']} search="Search Administrative Tools" />
    <ExplorerBody>
      <Sidebar>
        <SideItem href="#" $selected><SideArt><QuickAccessIcon /></SideArt>Quick access</SideItem>
        {sideItems.map(([name, icon, pinned]) => (
          <SideItem key={name} href="#" $level="child"><SideArt>{icon}</SideArt>{name}{pinned && <SidePin><PinIcon /></SidePin>}</SideItem>
        ))}
        <SideGap />
        {rootItems.map(([name, icon]) => (
          <SideItem key={name} href="#" $level="root"><SideArt>{icon}</SideArt>{name}</SideItem>
        ))}
      </Sidebar>
      <FilePane>
        <FileHeader>
          <FileHeadCell>Name<SortMark><SortIcon /></SortMark></FileHeadCell>
          <FileHeadCell /><FileHeadCell /><span />
        </FileHeader>
        {files.map(([name, kind, shield]) => (
          <FileRow key={name} $selected={kind === 'defrag'}><FileIcon kind={kind} shield={shield} />{name}</FileRow>
        ))}
      </FilePane>
    </ExplorerBody>
    <StatusBar>
      <span>17 items</span><StatusRule /><span>1 item selected</span><StatusSize>1.13 KB</StatusSize>
    </StatusBar>
  </Explorer>
);

/* ---------- optimize drives dialog ---------- */

const Dialog = styled.section`
  position: absolute;
  top: 256px;
  left: 290px;
  width: 701px;
  border: 1px solid #1c7cc8;
  background: #fff;
  box-shadow: 0 3px 16px rgba(0, 0, 0, 0.4);
  color: #000;
`;
const DialogTop = styled.header`
  display: flex;
  align-items: center;
  height: 30px;
  padding: 0 1px 0 8px;
`;
const DialogTitle = styled.h2`
  margin: 0 0 0 5px;
  font-size: 11px;
  font-weight: 400;
`;
const DialogBody = styled.div`
  padding: 13px 11px 0 12px;
`;
const Intro = styled.p`
  margin: 0 0 23px;
  padding-right: 20px;
  line-height: 15px;
`;
const Section = styled.div`
  display: flex;
  align-items: center;
`;
const SectionName = styled.h3<{ $width: number }>`
  width: ${p => p.$width}px;
  margin: 0;
  font-size: 11px;
  font-weight: 400;
`;
const SectionRule = styled.span`
  flex: 1;
  height: 1px;
  background: #c3c3c3;
`;
const DriveBox = styled.div`
  height: 152px;
  margin: 12px 0 10px;
  border: 1px solid #828790;
`;
const DriveTable = styled.table`
  width: 643px;
  border-collapse: separate;
  border-spacing: 0;
  table-layout: fixed;
`;
const HeadCell = styled.th<{ $width: number }>`
  width: ${p => p.$width}px;
  height: 25px;
  padding: 0 0 0 6px;
  border-right: 1px solid #e2e6ea;
  font-weight: 400;
  text-align: left;
  &:first-child { padding-left: 7px; }
`;
const DriveRow = styled.tr<{ $selected?: boolean }>`
  ${p => p.$selected && css`
    background: linear-gradient(90deg, #fff 21px, #3399ff 21px);
    color: #fff;
  `}
`;
const DriveCell = styled.td`
  height: 19px;
  padding: 0 0 0 6px;
  line-height: 18px;
`;
const DriveName = styled.div`
  display: flex;
  align-items: center;
  gap: 2px;
  margin-left: -1px;
`;
const Actions = styled.div`
  display: flex;
  justify-content: flex-end;
  gap: 15px;
  margin-bottom: 24px;
  padding-right: 1px;
`;
const PushButton = styled.button<{ $width: number }>`
  display: flex;
  align-items: center;
  justify-content: center;
  gap: 2px;
  width: ${p => p.$width}px;
  height: 24px;
  border: 1px solid #adadad;
  background: #e1e1e1;
  &:disabled {
    border-color: #bfbfbf;
    background: #ccc;
    color: #8b8b8b;
    svg { opacity: 0.55; }
  }
`;
const Schedule = styled.div`
  display: flex;
  align-items: flex-start;
  justify-content: space-between;
  height: 108px;
  padding: 7px 1px 0 21px;
`;
const ScheduleText = styled.div`
  display: grid;
  gap: 6px;
  padding-top: 5px;
`;
const DialogFoot = styled.footer`
  display: flex;
  justify-content: flex-end;
  padding: 11px 13px 10px;
  border-top: 1px solid #dfdfdf;
  background: #f0f0f0;
`;

const OptimizeDialog = () => (
  <Dialog role="dialog" aria-label="Optimize Drives">
    <DialogTop>
      <DefragIcon />
      <DialogTitle>Optimize Drives</DialogTitle>
      <Controls $color="#000">
        <ControlButton aria-label="Minimize"><MinIcon /></ControlButton>
        <ControlButton aria-label="Maximize" disabled><MaxIcon /></ControlButton>
        <ControlButton aria-label="Close"><CloseIcon /></ControlButton>
      </Controls>
    </DialogTop>
    <DialogBody>
      <Intro>You can optimize your drives to help your computer run more efficiently, or analyze them to find out if they need to be optimized. Only drives on or connected to your computer are shown.</Intro>
      <Section><SectionName $width={96}>Status</SectionName><SectionRule /></Section>
      <DriveBox>
        <DriveTable>
          <thead>
            <tr>
              <HeadCell $width={135}>Drive</HeadCell><HeadCell $width={147}>Media type</HeadCell>
              <HeadCell $width={120}>Last run</HeadCell><HeadCell $width={241}>Current status</HeadCell>
            </tr>
          </thead>
          <tbody>
            <DriveRow $selected>
              <DriveCell><DriveName><SystemDriveIcon />(C:)</DriveName></DriveCell>
              <DriveCell>Solid state drive</DriveCell><DriveCell>Never run</DriveCell><DriveCell>Needs optimization</DriveCell>
            </DriveRow>
            <DriveRow>
              <DriveCell><DriveName><DriveIcon />System Reserved</DriveName></DriveCell>
              <DriveCell>Solid state drive</DriveCell><DriveCell>Never run</DriveCell><DriveCell>Needs optimization</DriveCell>
            </DriveRow>
          </tbody>
        </DriveTable>
      </DriveBox>
      <Actions>
        <PushButton $width={121} disabled><ShieldIcon />Analyze</PushButton>
        <PushButton $width={121}><ShieldIcon />Optimize</PushButton>
      </Actions>
      <Section><SectionName $width={149}>Scheduled optimization</SectionName><SectionRule /></Section>
      <Schedule>
        <ScheduleText>
          <strong>On</strong>
          <span>Drives are being optimized automatically.</span>
          <span>Frequency: Weekly</span>
        </ScheduleText>
        <PushButton $width={147}><ShieldIcon />Change settings</PushButton>
      </Schedule>
    </DialogBody>
    <DialogFoot><PushButton $width={86}>Close</PushButton></DialogFoot>
  </Dialog>
);

/* ---------- taskbar ---------- */

const Bar = styled.footer`
  position: relative;
  display: flex;
  height: 40px;
  background: #03060c;
  color: #fff;
`;
const StartButton = styled.button`
  display: grid;
  place-items: center;
  width: 48px;
`;
const TaskSearch = styled.input`
  width: 344px;
  padding-left: 12px;
  background: #333436;
  font-size: 14px;
  outline: 0;
  &::placeholder { color: #a0a0a0; opacity: 1; }
`;
const TaskButton = styled.button<{ $state?: 'running' | 'active' }>`
  display: grid;
  place-items: center;
  width: 49px;
  border-bottom: ${p => (p.$state ? '2px solid #76b9ed' : '0')};
  background: ${p => (p.$state === 'active' ? '#33393f' : 'none')};
`;
const Tray = styled.div`
  display: flex;
  align-items: center;
  gap: 8px;
  margin-left: auto;
  padding-right: 4px;
`;
const Clock = styled.div`
  height: 40px;
  margin-left: 4px;
  padding: 3px 8px 0 0;
  border-right: 1px solid #3d4045;
  line-height: 17px;
  text-align: center;
`;
const Watermark = styled.div`
  position: absolute;
  top: 0;
  right: 24px;
  display: flex;
  gap: 12px;
  color: #6f7174;
  font-size: 17px;
  line-height: 30px;
  pointer-events: none;
`;

const Taskbar = () => (
  <Bar>
    <Watermark><BookIcon />The Collection Book</Watermark>
    <StartButton aria-label="Start"><StartIcon /></StartButton>
    <TaskSearch type="text" placeholder="Search the web and Windows" aria-label="Search the web and Windows" />
    <TaskButton aria-label="Task View"><TaskViewIcon /></TaskButton>
    <TaskButton aria-label="Edge"><EdgeIcon /></TaskButton>
    <TaskButton aria-label="File Explorer"><FolderTaskIcon /></TaskButton>
    <TaskButton aria-label="Store"><StoreIcon /></TaskButton>
    <TaskButton aria-label="Control Panel" $state="running"><ControlPanelTask /></TaskButton>
    <TaskButton aria-label="Optimize Drives" $state="active"><DefragIcon size={22} /></TaskButton>
    <Tray>
      <IconButton aria-label="Show hidden icons"><TrayUp /></IconButton>
      <IconButton aria-label="Network"><TrayNet /></IconButton>
      <IconButton aria-label="Volume"><TrayVolume /></IconButton>
      <IconButton aria-label="Action Center"><TrayAction /></IconButton>
      <Clock>9:42 AM<br />9/14/2015</Clock>
    </Tray>
  </Bar>
);

export default function App() {
  return (
    <Desktop>
      <GlobalStyle />
      <ControlPanel />
      <ExplorerWindow />
      <OptimizeDialog />
      <Taskbar />
    </Desktop>
  );
}
